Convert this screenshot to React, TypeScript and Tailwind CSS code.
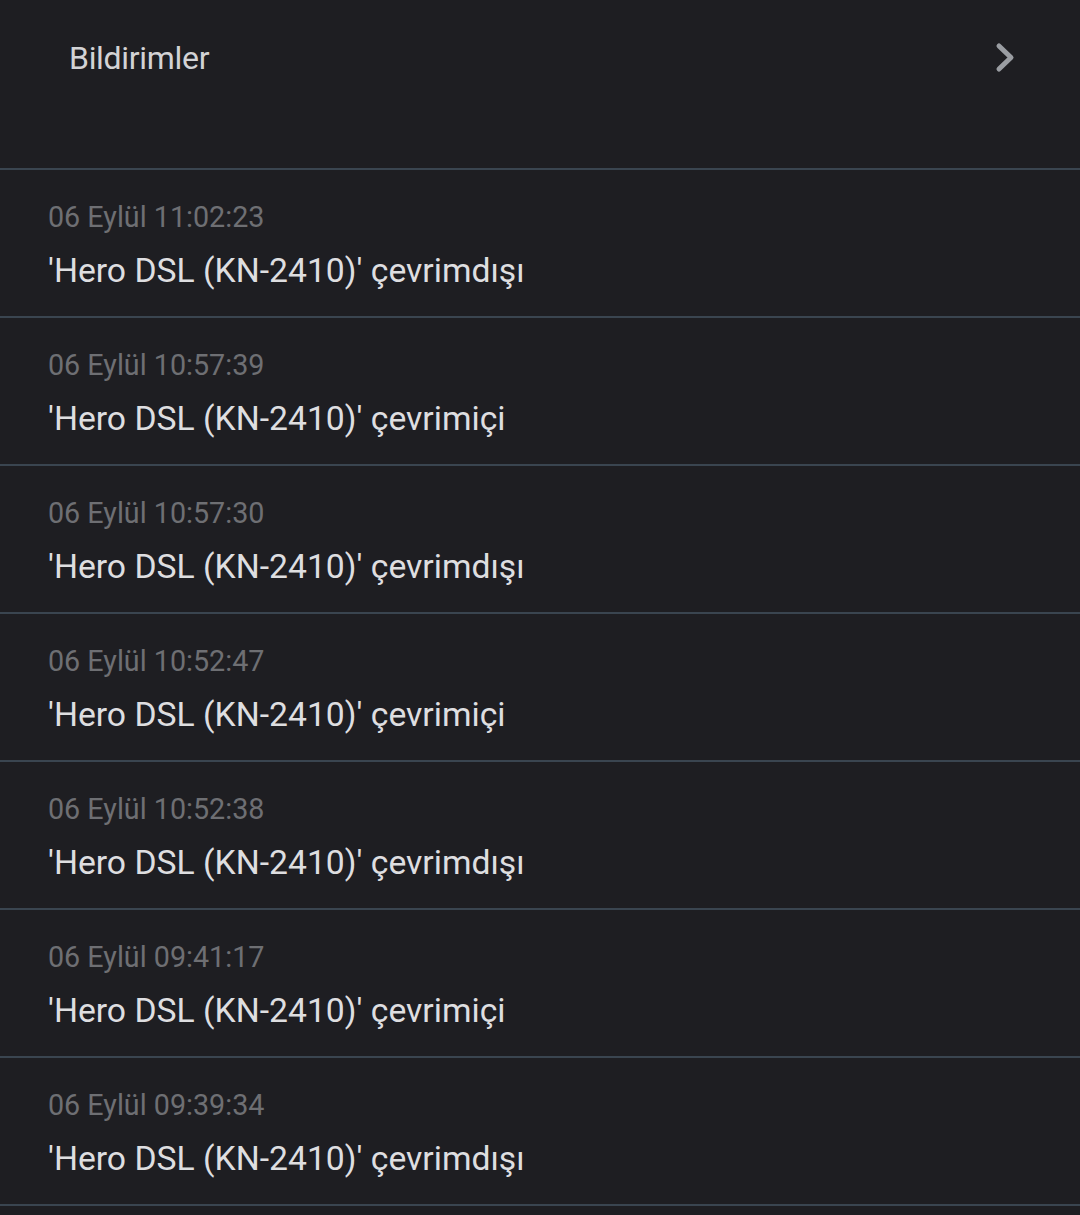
import React from 'react';

// Bildirim listesi: tarih + cihaz durumu
const items = [
    { date: '06 Eylül 11:02:23', text: "'Hero DSL (KN-2410)' çevrimdışı" },
    { date: '06 Eylül 10:57:39', text: "'Hero DSL (KN-2410)' çevrimiçi" },
    { date: '06 Eylül 10:57:30', text: "'Hero DSL (KN-2410)' çevrimdışı" },
    { date: '06 Eylül 10:52:47', text: "'Hero DSL (KN-2410)' çevrimiçi" },
    { date: '06 Eylül 10:52:38', text: "'Hero DSL (KN-2410)' çevrimdışı" },
    { date: '06 Eylül 09:41:17', text: "'Hero DSL (KN-2410)' çevrimiçi" },
    { date: '06 Eylül 09:39:34', text: "'Hero DSL (KN-2410)' çevrimdışı" },
];

function Chevron() {
    return (
        <svg width="24" height="32" viewBox="0 0 24 32" fill="none">
            <path d="M5 4 L17 15.5 L5 27" stroke="#9a9da2" strokeWidth="5" strokeLinecap="round" strokeLinejoin="round" />
        </svg>
    );
}

export default function App() {
    return (
        <div className="min-h-screen w-[1080px] h-[1215px] overflow-hidden bg-[#1e1e22] font-['Roboto',sans-serif]">
            {/* header */}
            <div className="h-[170px] border-b-2 border-[#3a4550]">
                <div className="flex items-center justify-between pl-[69px] pr-[62px] pt-[37px]">
                    <span className="text-[32px] leading-[42px] tracking-[-0.3px] text-[#d3d3d5]">Bildirimler</span>
                    <Chevron />
                </div>
            </div>

            {/* list */}
            <ul>
                {items.map((it, i) => (
                    <li key={i} className="h-[148px] border-b-2 border-[#3a4550] pl-[48px] pt-[29px]">
                        <div className="text-[28.7px] leading-[36px] text-[#6e6f73]">{it.date}</div>
                        <div className="mt-[14px] text-[33.7px] leading-[44px] text-[#dedee0]">{it.text}</div>
                    </li>
                ))}
            </ul>
        </div>
    );
}
